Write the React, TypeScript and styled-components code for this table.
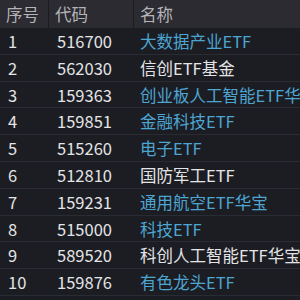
import React from "react";
import styled, { createGlobalStyle } from "styled-components";

const Global = createGlobalStyle`
  html, body { margin: 0; padding: 0; background: #1b1d23; }
  body { font-family: "Noto Sans CJK SC", "Noto Sans", sans-serif; }
`;

const Table = styled.div`
  width: 300px;
  height: 300px;
  overflow: hidden;
  background: #1b1d23;
  display: grid;
  grid-template-columns: 48px 85px 1fr;
  grid-template-rows: 28px;
  grid-auto-rows: 26.8px;
`;

const Head = styled.div<{ $first?: boolean }>`
  background: #2b2b31;
  color: #b4b4b8;
  font-size: 16.5px;
  line-height: 28px;
  padding-left: 6px;
  border-left: ${(p) => (p.$first ? "none" : "1px solid #1c1c20")};
  white-space: nowrap;
`;

const Cell = styled.div<{ $color?: string; $pad?: number }>`
  color: ${(p) => p.$color || "#e4e4e6"};
  font-size: 16.5px;
  line-height: 26px;
  padding-left: ${(p) => p.$pad ?? 8}px;
  border-bottom: 1px solid #2a2c33;
  white-space: nowrap;
  overflow: hidden;
`;

const BLUE = "#4ea5d2";
const WHITE = "#e4e4e6";

const data: { n: string; code: string; name: string; blue: boolean }[] = [
  { n: "1", code: "516700", name: "大数据产业ETF", blue: true },
  { n: "2", code: "562030", name: "信创ETF基金", blue: false },
  { n: "3", code: "159363", name: "创业板人工智能ETF华宝", blue: true },
  { n: "4", code: "159851", name: "金融科技ETF", blue: true },
  { n: "5", code: "515260", name: "电子ETF", blue: true },
  { n: "6", code: "512810", name: "国防军工ETF", blue: false },
  { n: "7", code: "159231", name: "通用航空ETF华宝", blue: true },
  { n: "8", code: "515000", name: "科技ETF", blue: true },
  { n: "9", code: "589520", name: "科创人工智能ETF华宝", blue: false },
  { n: "10", code: "159876", name: "有色龙头ETF", blue: true },
];

export default function App() {
  return (
    <>
      <Global />
      <Table>
        <Head $first>序号</Head>
        <Head>代码</Head>
        <Head>名称</Head>
        {data.map((r) => (
          <React.Fragment key={r.n}>
            <Cell $pad={8}>{r.n}</Cell>
            <Cell $pad={9}>{r.code}</Cell>
            <Cell $pad={7} $color={r.blue ? BLUE : WHITE}>
              {r.name}
            </Cell>
          </React.Fragment>
        ))}
      </Table>
    </>
  );
}
